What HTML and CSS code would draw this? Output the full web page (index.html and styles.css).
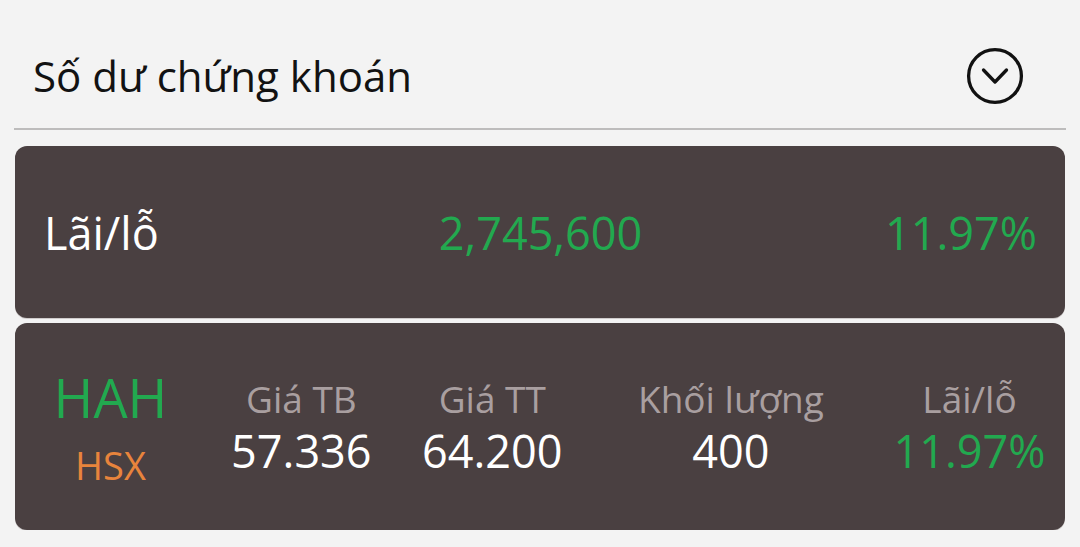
FILE: index.html
```html
<!DOCTYPE html>
<html lang="vi">
<head>
<meta charset="utf-8">
<title>Số dư chứng khoán</title>
<link rel="stylesheet" href="styles.css">
</head>
<body>
<main class="page">
  <header class="header">
    <h1 class="title">Số dư chứng khoán</h1>
    <button class="toggle" aria-label="Mở rộng">
      <svg width="58" height="58" viewBox="0 0 58 58" fill="none" stroke="#111" stroke-width="3.3" stroke-linecap="round" stroke-linejoin="round">
        <circle cx="29" cy="29" r="26.4"/>
        <path d="M17.5 23 L29 35 L40.5 23"/>
      </svg>
    </button>
  </header>

  <section class="card summary">
    <span class="sum-label">Lãi/lỗ</span>
    <span class="sum-value up">2,745,600</span>
    <span class="sum-pct up">11.97%</span>
  </section>

  <section class="card holding">
    <div class="col symbol">
      <span class="ticker up">HAH</span>
      <span class="exchange">HSX</span>
    </div>
    <div class="col">
      <span class="label">Giá TB</span>
      <span class="value">57.336</span>
    </div>
    <div class="col">
      <span class="label">Giá TT</span>
      <span class="value">64.200</span>
    </div>
    <div class="col">
      <span class="label">Khối lượng</span>
      <span class="value">400</span>
    </div>
    <div class="col">
      <span class="label">Lãi/lỗ</span>
      <span class="value up">11.97%</span>
    </div>
  </section>
</main>
</body>
</html>
```

FILE: styles.css
```css
html, body {
  margin: 0;
  padding: 0;
  background: #f3f3f3;
}

body {
  font-family: "Open Sans", "Noto Sans", sans-serif;
  color: #111;
}

.page {
  padding: 0 14px;
}

.header {
  height: 130px;
  box-sizing: border-box;
  display: flex;
  align-items: center;
  justify-content: space-between;
  border-bottom: 2px solid #bdbcbc;
  padding: 24px 42px 0 19px;
}

.title {
  margin: 0;
  font-size: 42px;
  font-weight: 400;
  line-height: 1;
  color: #121212;
}

.toggle {
  border: 0;
  background: none;
  padding: 0;
  width: 58px;
  height: 58px;
  display: flex;
}

.card {
  background: #4a4041;
  border-radius: 12px;
  box-shadow: 0 1px 0 #cfcbcb;
  margin: 0 1px;
  font-weight: 500;
}

.summary {
  margin-top: 16px;
  height: 172px;
  display: grid;
  grid-template-columns: 1fr auto 1fr;
  align-items: center;
  padding: 0 28px 0 29px;
  font-size: 45px;
  line-height: 1;
}

.sum-label {
  color: #fff;
}

.sum-value {
  text-align: center;
}

.sum-pct {
  text-align: right;
}

.up {
  color: #22a94f;
}

.holding {
  margin-top: 5px;
  height: 207px;
  display: grid;
  grid-template-columns: 2fr 2fr 2fr 3fr 2fr;
  align-items: center;
}

.col {
  display: flex;
  flex-direction: column;
  align-items: center;
  line-height: 1;
}

.ticker {
  font-size: 54px;
  margin-bottom: 22px;
}

.exchange {
  font-size: 38px;
  color: #e8843c;
}

.label {
  font-size: 37px;
  color: #a99fa0;
  margin-bottom: 11px;
}

.value {
  font-size: 45px;
  color: #fff;
}

.value.up {
  color: #22a94f;
}
```
